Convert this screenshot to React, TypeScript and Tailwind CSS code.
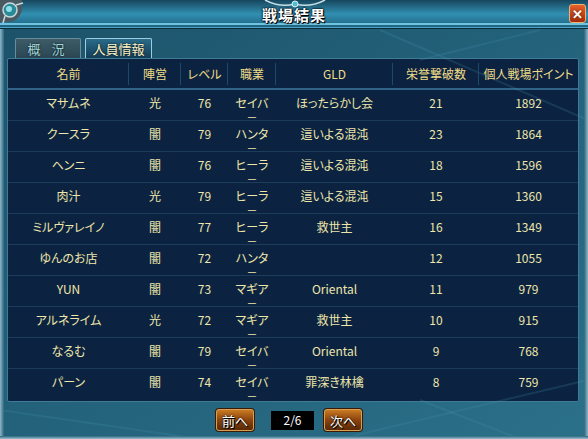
import React from "react";

type Row = {
  name: string;
  side: string;
  lv: string;
  job: string;
  gld: string;
  kills: string;
  pts: string;
};

const rows: Row[] = [
  { name: "マサムネ", side: "光", lv: "76", job: "セイバ", gld: "ほったらかし会", kills: "21", pts: "1892" },
  { name: "クースラ", side: "闇", lv: "79", job: "ハンタ", gld: "這いよる混沌", kills: "23", pts: "1864" },
  { name: "ヘンニ", side: "闇", lv: "76", job: "ヒーラ", gld: "這いよる混沌", kills: "18", pts: "1596" },
  { name: "肉汁", side: "光", lv: "79", job: "ヒーラ", gld: "這いよる混沌", kills: "15", pts: "1360" },
  { name: "ミルヴァレイノ", side: "闇", lv: "77", job: "ヒーラ", gld: "救世主", kills: "16", pts: "1349" },
  { name: "ゆんのお店", side: "闇", lv: "72", job: "ハンタ", gld: "", kills: "12", pts: "1055" },
  { name: "YUN", side: "闇", lv: "73", job: "マギア", gld: "Oriental", kills: "11", pts: "979" },
  { name: "アルネライム", side: "光", lv: "72", job: "マギア", gld: "救世主", kills: "10", pts: "915" },
  { name: "なるむ", side: "闇", lv: "79", job: "セイバ", gld: "Oriental", kills: "9", pts: "768" },
  { name: "パーン", side: "闇", lv: "74", job: "セイバ", gld: "罪深き林檎", kills: "8", pts: "759" },
];

const font =
  "font-['Noto_Sans_CJK_JP','Noto_Sans',sans-serif] [font-feature-settings:'palt']";

function HeadCell({ w, children, last }: { w: string; children: React.ReactNode; last?: boolean }) {
  return (
    <div className={`${w} relative flex items-center justify-center`}>
      <span>{children}</span>
      {!last && <div className="absolute right-0 top-[4px] bottom-[3px] w-px bg-[#1d4a6a]" />}
    </div>
  );
}

function Btn({ label }: { label: string }) {
  return (
    <div className="h-[22px] w-[38px] rounded-[3px] border border-[#d8a050] bg-gradient-to-b from-[#c97a22] via-[#8a4410] to-[#5a2a06] flex items-center justify-center shadow-[0_0_0_1px_#3a1a04]">
      <span className="text-[13px] leading-none text-white [text-shadow:0_0_2px_#000,1px_1px_0_#000]">
        {label}
      </span>
    </div>
  );
}

export default function App() {
  return (
    <div
      className={`relative w-[588px] h-[439px] overflow-hidden flex flex-col bg-gradient-to-br from-[#1c5269] via-[#23627a] to-[#2b7089] ${font}`}
    >
      {/* decorative streaks */}
      <svg className="absolute inset-0 pointer-events-none" width="588" height="439">
        <g stroke="#4a98b4" strokeOpacity="0.2" strokeWidth="2">
          <line x1="380" y1="30" x2="588" y2="120" />
          <line x1="420" y1="60" x2="540" y2="30" />
          <line x1="0" y1="410" x2="200" y2="439" />
          <line x1="340" y1="439" x2="588" y2="380" />
          <line x1="420" y1="400" x2="520" y2="439" />
        </g>
      </svg>

      {/* outer frame edges */}
      <div className="absolute left-0 top-[20px] bottom-0 w-[4px] bg-gradient-to-r from-[#8fb8c8] to-[#2c6680]" />
      <div className="absolute right-0 top-[20px] bottom-0 w-[4px] bg-gradient-to-l from-[#8fb8c8] to-[#2c6680]" />
      <div className="absolute left-0 right-0 bottom-0 h-[3px] bg-gradient-to-t from-[#9cc4d2] to-[#2c6680]" />

      {/* title bar */}
      <div className="relative h-[29px] shrink-0 flex items-center justify-center bg-gradient-to-b from-[#17475e] via-[#3290b2] to-[#1e5f7c] border-b border-[#0c2c3c]">
        <div className="absolute left-0 right-0 bottom-[3px] h-[2px] bg-[#6ec4de]" />
        <div className="absolute left-0 right-0 bottom-0 h-px bg-[#4aa4c4]" />
        <div className="absolute left-0 top-0 w-[22px] h-[22px] bg-[#4a5a62] rounded-br-[14px]" />
        <svg className="absolute left-[1px] top-[1px]" width="24" height="24">
          <circle cx="9" cy="9" r="7" fill="#2b8a98" stroke="#c8d8dc" strokeWidth="1.5" />
          <circle cx="8" cy="8" r="3" fill="#8ee0e8" />
          <path d="M15 4 L22 2 M4 15 L2 22" stroke="#c8d8dc" strokeWidth="1.5" />
        </svg>
        <svg className="absolute left-[260px] top-0" width="70" height="10">
          <path d="M5 0 Q20 8 35 4 Q50 8 65 0" stroke="#c8dce4" strokeWidth="1.5" fill="none" />
          <circle cx="35" cy="4" r="3" fill="#4cc0d0" stroke="#e0f0f4" />
        </svg>
        <span className="relative mt-[3px] text-[15px] font-bold text-white tracking-[1px] [text-shadow:0_0_2px_#000,0_0_2px_#000,1px_1px_0_#000]">
          戦場結果
        </span>
        <div className="absolute right-[2px] top-[4px] w-[17px] h-[19px] rounded-[3px] border border-[#f0b070] bg-gradient-to-b from-[#e8602a] to-[#a02a0a] flex items-center justify-center">
          <span className="text-[13px] font-bold leading-none text-white [text-shadow:0_0_2px_#5a1000]">
            ✕
          </span>
        </div>
      </div>

      {/* tabs */}
      <div className="flex gap-[4px] pl-[15px] pt-[9px] shrink-0">
        <div className="w-[66px] h-[20px] border border-b-0 border-[#6a8c98] bg-gradient-to-b from-[#3d5c68] to-[#2a4652] rounded-t-[2px] flex items-center justify-center">
          <span className="text-[13px] leading-none text-[#9fd6dc] [text-shadow:0_0_2px_#000] tracking-[4px]">
            概 況
          </span>
        </div>
        <div className="w-[67px] h-[20px] border border-b-0 border-[#9ccce0] bg-gradient-to-b from-[#2a6c8a] to-[#143e58] rounded-t-[2px] flex items-center justify-center">
          <span className="text-[13px] leading-none text-[#fbf3c8] [text-shadow:0_0_2px_#000]">
            人員情報
          </span>
        </div>
      </div>

      {/* panel */}
      <div className="ml-[7px] w-[572px] h-[344px] shrink-0 bg-[#0b2340] border border-[#3f7a98] rounded-[2px] flex flex-col text-[12px] leading-[14px]">
        <div className="h-[31px] flex shrink-0 text-[#f0dc88] border-b-2 border-[#2f6488]">
          <HeadCell w="w-[121px]">名前</HeadCell>
          <HeadCell w="w-[52px]">陣営</HeadCell>
          <HeadCell w="w-[47px]">レベル</HeadCell>
          <HeadCell w="w-[48px]">職業</HeadCell>
          <HeadCell w="w-[117px]">GLD</HeadCell>
          <HeadCell w="w-[86px]">栄誉撃破数</HeadCell>
          <HeadCell w="w-[99px]" last>
            個人戦場ポイント
          </HeadCell>
        </div>
        {rows.map((r, i) => (
          <div
            key={i}
            className={`h-[31px] shrink-0 flex pt-[6px] text-[#efe6ac] ${
              i < rows.length - 1 ? "border-b border-[#1b3c5a]" : ""
            }`}
          >
            <div className="w-[121px] text-center">{r.name}</div>
            <div className="w-[52px] text-center">{r.side}</div>
            <div className="w-[47px] text-center">{r.lv}</div>
            <div className="w-[48px] mt-[-2px] flex flex-col items-center">
              <span className="leading-[18px]">{r.job}</span>
              <span className="text-[8px] leading-[12px] scale-x-125">ー</span>
            </div>
            <div className="w-[117px] text-center">{r.gld}</div>
            <div className="w-[86px] text-center">{r.kills}</div>
            <div className="w-[99px] text-center">{r.pts}</div>
          </div>
        ))}
      </div>

      {/* pagination */}
      <div className="flex items-center pl-[216px] pt-[7px]">
        <Btn label="前へ" />
        <div className="ml-[17px] w-[43px] h-[19px] bg-black flex items-center justify-center">
          <span className="text-[12px] leading-none text-white">2/6</span>
        </div>
        <div className="ml-[10px]">
          <Btn label="次へ" />
        </div>
      </div>
    </div>
  );
}
